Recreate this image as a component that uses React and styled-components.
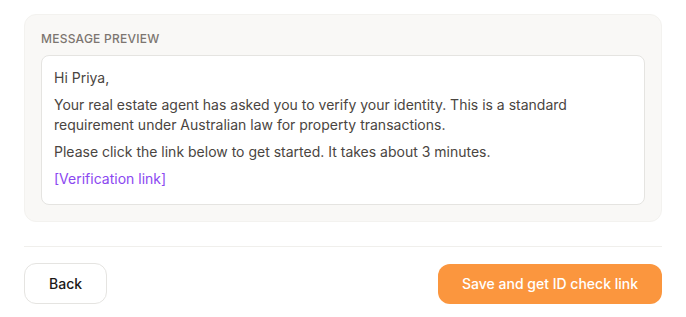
import React from "react";
import styled, { createGlobalStyle } from "styled-components";

const GlobalStyle = createGlobalStyle`
  * {
    box-sizing: border-box;
  }
  body {
    margin: 0;
    background: #ffffff;
    font-family: Inter, "Noto Sans", sans-serif;
    -webkit-font-smoothing: antialiased;
  }
`;

const Page = styled.div`
  padding: 14px 24px 0 24px;
  width: 686px;
`;

const PreviewPanel = styled.section`
  background: #f9f8f6;
  border: 1px solid #f3f2ef;
  border-radius: 12px;
  padding: 16px;
`;

const Label = styled.div`
  font-size: 12px;
  line-height: 16px;
  font-weight: 500;
  letter-spacing: 0.02em;
  text-transform: uppercase;
  color: #7c7570;
  margin-bottom: 8px;
`;

const MessageBox = styled.div`
  background: #ffffff;
  border: 1px solid #e5e4e1;
  border-radius: 8px;
  padding: 12px 12px 15px 12px;
  display: flex;
  flex-direction: column;
  gap: 7px;
`;

const Paragraph = styled.p`
  margin: 0;
  font-size: 14px;
  line-height: 20px;
  color: ${(p) => (p.$link ? "#8b48f1" : "#4a4541")};
`;

const Footer = styled.div`
  margin-top: 24px;
  border-top: 1px solid #f0efec;
  padding-top: 16px;
  display: flex;
  justify-content: space-between;
  align-items: center;
`;

const Button = styled.button`
  font-family: Inter, "Noto Sans", sans-serif;
  font-size: 14px;
  font-weight: 500;
  line-height: 20px;
  padding: 0 24px;
  border-radius: 12px;
  cursor: pointer;
  height: ${(p) => (p.$primary ? "40px" : "41px")};
  background: ${(p) => (p.$primary ? "#fb963e" : "#ffffff")};
  color: ${(p) => (p.$primary ? "#ffffff" : "#1c1917")};
  border: ${(p) => (p.$primary ? "none" : "1px solid #e5e4e1")};
`;

export default function App() {
  return (
    <>
      <GlobalStyle />
      <Page>
        <PreviewPanel>
          <Label>Message preview</Label>
          <MessageBox>
            <Paragraph>Hi Priya,</Paragraph>
            <Paragraph>
              Your real estate agent has asked you to verify your identity. This is a standard
              requirement under Australian law for property transactions.
            </Paragraph>
            <Paragraph>Please click the link below to get started. It takes about 3 minutes.</Paragraph>
            <Paragraph $link>[Verification link]</Paragraph>
          </MessageBox>
        </PreviewPanel>
        <Footer>
          <Button>Back</Button>
          <Button $primary>Save and get ID check link</Button>
        </Footer>
      </Page>
    </>
  );
}
